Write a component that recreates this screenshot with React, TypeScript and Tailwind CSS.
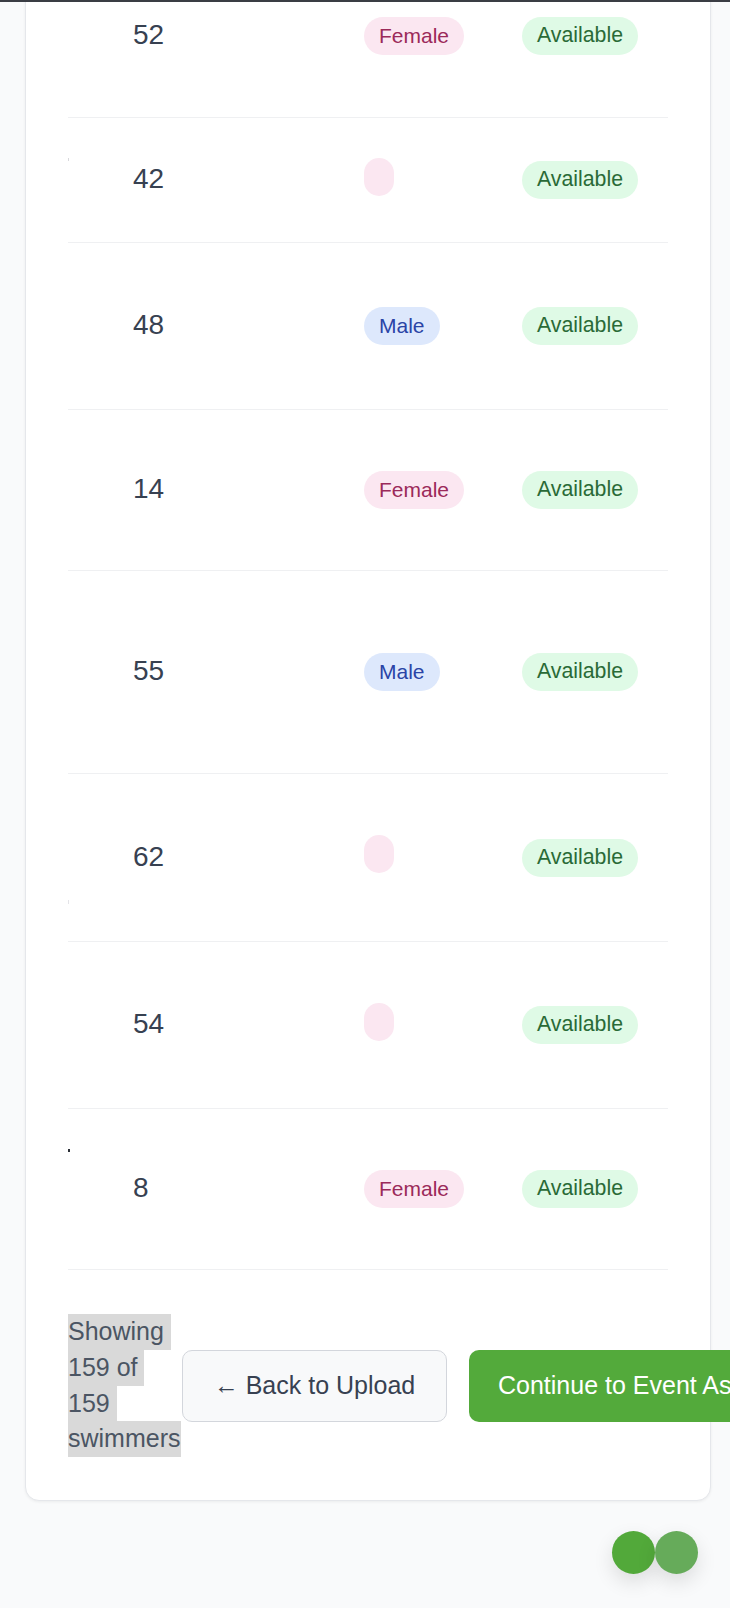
import React from "react";

type Row = { age: string; gender: "Female" | "Male" | ""; h: number; mark?: { top: number; cls: string } };

const rows: Row[] = [
  { age: "52", gender: "Female", h: 164 },
  { age: "42", gender: "", h: 125, mark: { top: 40, cls: "w-[1px] h-[3px] bg-[#d8d8dc]" } },
  { age: "48", gender: "Male", h: 167 },
  { age: "14", gender: "Female", h: 161 },
  { age: "55", gender: "Male", h: 203 },
  { age: "62", gender: "", h: 168, mark: { top: 126, cls: "w-[1px] h-[4px] bg-[#e4e4e8]" } },
  { age: "54", gender: "", h: 167 },
  { age: "8", gender: "Female", h: 161, mark: { top: 40, cls: "w-[2px] h-[3px] bg-[#2b2f36]" } },
];

function GenderBadge({ g }: { g: Row["gender"] }) {
  if (g === "Female")
    return (
      <span className="inline-flex h-[38px] items-center rounded-full bg-[#fbe7f1] px-[15px] text-[21px] text-[#9b2a5a]">
        Female
      </span>
    );
  if (g === "Male")
    return (
      <span className="inline-flex h-[38px] items-center rounded-full bg-[#dde8fc] px-[15px] text-[21px] text-[#2a44a6]">
        Male
      </span>
    );
  return <span className="inline-flex h-[38px] w-[30px] rounded-full bg-[#fbe7f1]" />;
}

export default function App() {
  return (
    <div className="relative h-[1608px] w-full overflow-hidden bg-[#f9fafb] font-['Liberation_Sans',Arial,sans-serif]">
      <div className="absolute left-0 right-0 top-0 z-10 h-[2px] bg-[#3a3d44]" />

      <div className="ml-[25px] mt-[-47px] w-[686px] rounded-[14px] border border-[#e5e7eb] bg-white px-[42px] pb-[43px] shadow-[0_1px_3px_rgba(0,0,0,0.06)]">
        <div className="flex flex-col">
          {rows.map((r, i) => (
            <div
              key={i}
              className="relative flex items-center border-b border-[#eff0f2]"
              style={{ height: r.h }}
            >
              {r.mark && (
                <span className={"absolute left-0 " + r.mark.cls} style={{ top: r.mark.top }} />
              )}
              <div className="w-[65px] shrink-0" />
              <div className="w-[231px] shrink-0 -translate-y-[1px] text-[28px] leading-none text-[#374151]">{r.age}</div>
              <div className="w-[158px] shrink-0">
                <GenderBadge g={r.gender} />
              </div>
              <div>
                <span className="inline-flex h-[38px] items-center rounded-full bg-[#dffae6] px-[15px] text-[21.3px] text-[#2a6a37]">
                  Available
                </span>
              </div>
            </div>
          ))}
        </div>

        <div className="mt-[44px] flex items-center">
          <div className="flex w-[114px] shrink-0 flex-col text-[25px] leading-[35.75px] text-[#4b5563]">
            <span className="w-fit whitespace-pre bg-[#d9d9d9]">Showing </span>
            <span className="w-fit whitespace-pre bg-[#d9d9d9]">159 of </span>
            <span className="w-fit whitespace-pre bg-[#d9d9d9]">159 </span>
            <span className="w-fit whitespace-pre bg-[#d9d9d9]">swimmers</span>
          </div>
          <div className="flex shrink-0 items-center gap-[22px]">
            <button className="flex h-[72px] w-[265px] items-center justify-center whitespace-nowrap rounded-[10px] border-[1.5px] border-[#d3d6dc] bg-[#f8f9fa] text-[25px] text-[#374151]">
              ← Back to Upload
            </button>
            <button className="flex h-[72px] items-center whitespace-nowrap rounded-[10px] bg-[#53aa3b] px-[29px] text-[25px] text-white">
              Continue to Event Assignment →
            </button>
          </div>
        </div>
      </div>

      <div className="absolute left-[612px] top-[1531px] flex">
        <div className="h-[43px] w-[43px] rounded-full bg-[#52a93a] shadow-[0_8px_20px_rgba(0,0,0,0.12)]" />
        <div className="h-[43px] w-[43px] rounded-full bg-[#66ab5a] shadow-[0_8px_20px_rgba(0,0,0,0.12)]" />
      </div>
    </div>
  );
}
